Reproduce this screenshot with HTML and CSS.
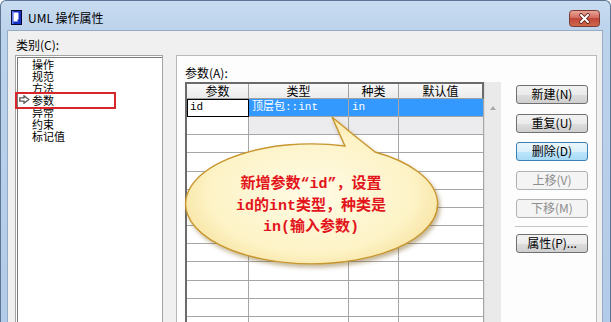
FILE: index.html
```html
<!DOCTYPE html>
<html>
<head>
<meta charset="utf-8">
<link rel="stylesheet" href="styles.css">
</head>
<body>
<div class="window">
  <div class="titlebar">
    <svg class="appicon" width="11" height="15" viewBox="0 0 11 15">
      <rect x="0.5" y="0.5" width="10" height="14" fill="#1530c4" stroke="#0a0a30"/>
      <rect x="1" y="1" width="1.5" height="13" fill="#5f7df0"/>
      <rect x="2.5" y="2.5" width="5" height="9" fill="#ffffff"/>
      <rect x="6.5" y="9.5" width="2" height="2" fill="#1530c4"/>
    </svg>
    <span class="title">UML 操作属性</span>
    <div class="close">
      <svg width="31" height="17" viewBox="0 0 31 17">
        <defs>
          <linearGradient id="cg" x1="0" y1="0" x2="0" y2="1">
            <stop offset="0" stop-color="#e9a99c"/>
            <stop offset="0.45" stop-color="#d26c5e"/>
            <stop offset="0.5" stop-color="#c0483a"/>
            <stop offset="1" stop-color="#cf6a4c"/>
          </linearGradient>
        </defs>
        <rect x="0.5" y="0.5" width="30" height="16" rx="3" fill="url(#cg)" stroke="#7a3a33"/>
        <path d="M12 5 L19 12 M19 5 L12 12" stroke="#5a1f18" stroke-width="3.6" stroke-linecap="round"/>
        <path d="M12 5 L19 12 M19 5 L12 12" stroke="#ffffff" stroke-width="2" stroke-linecap="round"/>
      </svg>
    </div>
  </div>
  <div class="client">
    <div class="cat-label">类别(C):</div>
    <div class="listbox">
      <div class="item">操作</div>
      <div class="item">规范</div>
      <div class="item">方法</div>
      <div class="item current">
        <svg class="arrow" width="11" height="9" viewBox="0 0 11 9">
          <path d="M0.8 2.8 H5 V0.8 L9.8 4.5 L5 8.2 V6.2 H0.8 Z" fill="#ffffff" stroke="#555555" stroke-width="1.3" stroke-linejoin="miter"/>
        </svg>参数</div>
      <div class="item">异常</div>
      <div class="item">约束</div>
      <div class="item">标记值</div>
    </div>
    <div class="panel">
      <div class="table-col">
        <div class="plabel">参数(A):</div>
        <div class="tablewrap">
          <div class="grid">
            <div class="hd">参数</div><div class="hd">类型</div><div class="hd">种类</div><div class="hd">默认值</div>
            <div class="c edit">id</div><div class="c sel">顶层包::int</div><div class="c sel">in</div><div class="c sel"></div>
            <div class="c"></div><div class="c hov"></div><div class="c hov"></div><div class="c hov"></div>
            <div class="c"></div><div class="c"></div><div class="c"></div><div class="c"></div>
            <div class="c"></div><div class="c"></div><div class="c"></div><div class="c"></div>
            <div class="c"></div><div class="c"></div><div class="c"></div><div class="c"></div>
            <div class="c"></div><div class="c"></div><div class="c"></div><div class="c"></div>
            <div class="c"></div><div class="c"></div><div class="c"></div><div class="c"></div>
            <div class="c"></div><div class="c"></div><div class="c"></div><div class="c"></div>
            <div class="c"></div><div class="c"></div><div class="c"></div><div class="c"></div>
            <div class="c"></div><div class="c"></div><div class="c"></div><div class="c"></div>
            <div class="c"></div><div class="c"></div><div class="c"></div><div class="c"></div>
            <div class="c"></div><div class="c"></div><div class="c"></div><div class="c"></div>
            <div class="c"></div><div class="c"></div><div class="c"></div><div class="c"></div>
          </div>
          <div class="scrollbar"><div class="sb-top"></div><div class="sb-btn"><span class="up"></span></div></div>
        </div>
      </div>
      <div class="buttons">
        <div class="btn">新建(N)</div>
        <div class="btn">重复(U)</div>
        <div class="btn focus">删除(D)</div>
        <div class="btn disabled">上移(V)</div>
        <div class="btn disabled">下移(M)</div>
        <div class="sep"></div>
        <div class="btn">属性(P)...</div>
      </div>
    </div>
  </div>

  <div class="redbox"></div>

  <svg class="balloon" width="270" height="170" viewBox="0 0 270 170">
    <defs>
      <radialGradient id="bg" cx="50%" cy="52%" r="58%">
        <stop offset="0" stop-color="#fffbe6"/>
        <stop offset="0.7" stop-color="#fdf3c6"/>
        <stop offset="1" stop-color="#f7e09a"/>
      </radialGradient>
      <filter id="sh" x="-10%" y="-10%" width="125%" height="130%">
        <feDropShadow dx="2" dy="3" stdDeviation="2.2" flood-color="#6b4a10" flood-opacity="0.4"/>
      </filter>
    </defs>
    <path d="M165 36 L152 7 Q172 24 195 42 A126 60 0 1 1 165 36 Z" fill="url(#bg)" stroke="#c8962e" stroke-width="1.4" filter="url(#sh)"/>
  </svg>
  <div class="balloon-text">新增参数<span class="m">“id”</span>，设置<br><span class="m">id</span>的<span class="m">int</span>类型，种类是<br><span class="m">in(</span>输入参数<span class="m">)</span></div>
</div>
</body>
</html>
```

FILE: styles.css
```css
* { box-sizing: border-box; }
body {
  margin: 0;
  font-family: "Noto Sans CJK SC", "Liberation Sans", sans-serif;
  font-size: 12px;
  color: #000;
}
.window {
  position: relative;
  width: 611px;
  height: 322px;
  overflow: hidden;
  display: flex;
  flex-direction: column;
  padding: 0 7px 0 6px;
  background: linear-gradient(to bottom, #c8dbf0 0, #bcd3ec 30px, #b2cbe8 100%);
  border: 1px solid #5b7593;
  border-bottom: none;
  border-radius: 6px 6px 0 0;
}
.titlebar {
  height: 29px;
  flex: none;
  display: flex;
  align-items: center;
  padding: 4px 3px 0 4px;
}
.appicon { flex: none; margin-right: 6px; }
.title {
  flex: 1;
  font-size: 12px;
  line-height: 14px;
  color: #000;
}
.close { flex: none; width: 31px; height: 17px; margin-top: 1px; }
.close svg { display: block; }

.client {
  flex: 1;
  background: #f0f0f0;
  border: 1px solid #97abc4;
  border-bottom: none;
  display: grid;
  grid-template-columns: 148px 421px;
  grid-template-rows: 17px 1fr;
  column-gap: 13px;
  padding: 7px 5px 0 7px;
  overflow: hidden;
}
.cat-label {
  grid-column: 1;
  grid-row: 1;
  line-height: 13px;
  padding-left: 1px;
}
.listbox {
  grid-column: 1;
  grid-row: 2;
  background: #fff;
  border: 1px solid #a3a3a3;
  box-shadow: inset 1px 1px 0 #ffffff, inset 2px 2px 0 #7a7a7a;
  padding: 2px 0 0 16px;
}
.item {
  position: relative;
  height: 12px;
  line-height: 12px;
  font-size: 11px;
  white-space: nowrap;
}
.arrow {
  position: absolute;
  left: -13px;
  top: 1px;
}

.panel {
  grid-column: 2;
  grid-row: 2;
  background: #fdfdfd;
  border: 1px solid #b9b9b9;
  border-bottom: none;
  display: flex;
  padding: 10px 8px 0 8px;
}
.table-col { width: 316px; flex: none; }
.plabel { height: 16px; line-height: 13px; }
.tablewrap { display: flex; }
.grid {
  display: grid;
  grid-template-columns: 62px 100px 50px 85px;
  grid-template-rows: 15px;
  grid-auto-rows: 18.17px;
  border-top: 2px solid #6b6b6b;
  border-left: 2px solid #6b6b6b;
  background: #fff;
}
.hd {
  background: linear-gradient(#fafafa, #ebebeb);
  border-right: 1px solid #a0a0a0;
  border-bottom: 1px solid #a0a0a0;
  text-align: center;
  font-size: 12px;
  line-height: 13px;
}
.hd:nth-child(4) { border-right: 2px solid #6b6b6b; }
.c {
  border-right: 1px solid #a6a6a6;
  border-bottom: 1px solid #a6a6a6;
  font-family: "Liberation Mono", "Noto Sans CJK SC", monospace;
  font-size: 11px;
  line-height: 16px;
  padding-left: 3px;
  white-space: nowrap;
  overflow: hidden;
}
.c.edit {
  border: 1px solid #000;
  padding-left: 2px;
  line-height: 15px;
}
.c.sel { background: #3399ff; color: #fff; }
.c.hov { background: #ececef; }
.scrollbar {
  width: 17px;
  flex: none;
  background: #eaeaea;
  border-left: 1px solid #dcdcdc;
}
.sb-top { height: 17px; }
.sb-btn {
  height: 17px;
  display: flex;
  align-items: center;
  justify-content: center;
}
.up {
  width: 0;
  height: 0;
  border-left: 3.5px solid transparent;
  border-right: 3.5px solid transparent;
  border-bottom: 4px solid #a8a8a8;
}

.buttons {
  margin-left: 15px;
  width: 72px;
  flex: none;
  padding-top: 19px;
  display: flex;
  flex-direction: column;
  gap: 9.5px;
}
.btn {
  height: 19px;
  border: 1px solid #707070;
  border-radius: 3px;
  background: linear-gradient(#f2f2f2 0%, #ebebeb 50%, #dddddd 51%, #cfcfcf 100%);
  text-align: center;
  font-size: 12px;
  line-height: 16px;
  white-space: nowrap;
}
.btn.focus {
  border-color: #3c7fb1;
  background: linear-gradient(#eaf6fd 0%, #d9f0fc 50%, #bee6fd 51%, #a7d9f5 100%);
}
.btn.disabled {
  border-color: #adb2b5;
  background: #f4f4f4;
  color: #8d8d8d;
}
.sep {
  height: 1px;
  background: #c6c6c6;
  margin: -1.5px 0 -2.5px -1px;
}

.redbox {
  position: absolute;
  left: 14px;
  top: 91px;
  width: 101px;
  height: 17px;
  border: 2px solid #d9262b;
}
.balloon {
  position: absolute;
  left: 179px;
  top: 109px;
}
.balloon-text {
  position: absolute;
  left: 186px;
  top: 172px;
  width: 248px;
  text-align: center;
  font-size: 15px;
  line-height: 18.5px;
  font-weight: bold;
  color: #e3151c;
  white-space: nowrap;
  font-family: "Noto Sans CJK SC", sans-serif;
}
.balloon-text .m {
  font-family: "Liberation Mono", monospace;
}
```
